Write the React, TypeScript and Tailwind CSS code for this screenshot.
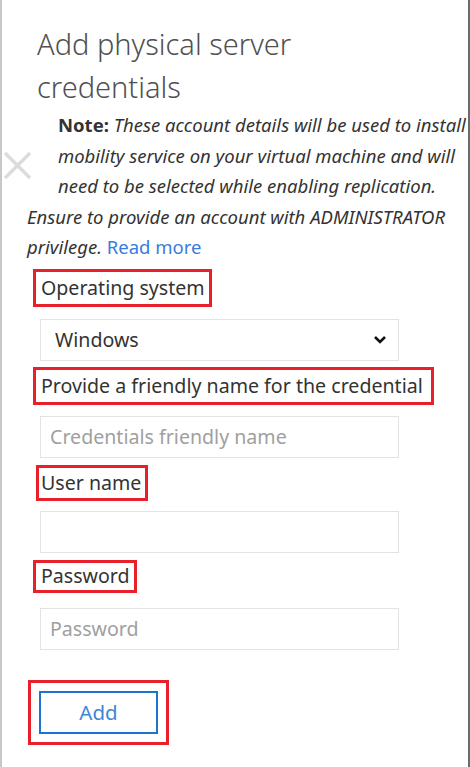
import React from "react";

function Field({ label, labelBox, children }: { label: string; labelBox: string; children: React.ReactNode }) {
  return (
    <div className="flex flex-col">
      <div className={`self-start border-[3px] border-[#e8202a] ${labelBox}`}>
        <span className="block text-[19.6px] leading-[24px] text-[#333]">{label}</span>
      </div>
      {children}
    </div>
  );
}

export default function App() {
  const inputCls =
    "w-[359px] h-[42px] ml-[7px] border border-[#e3e3e3] bg-white px-[9px] text-[19.6px] text-[#333] placeholder:text-[#a0a0a0] outline-none";

  return (
    <div
      className="relative w-[470px] h-[767px] overflow-hidden bg-white border-l-2 border-l-[#c8c8c8] border-r-2 border-r-[#6b6b6b]"
      style={{ fontFamily: '"Noto Sans", "Open Sans", sans-serif' }}
    >
      {/* close icon peeking in from the blade behind */}
      <svg className="absolute left-[1px] top-[151px]" width="30" height="29" viewBox="0 0 30 29">
        <path d="M2 2 L27 27 M27 2 L2 27" stroke="#dcdcdc" strokeWidth="3.5" />
      </svg>

      <h1 className="pl-[35px] pt-[22px] text-[29px] leading-[43px] font-light text-[#505050]">
        Add physical server
        <br />
        credentials
      </h1>

      <div className="mt-[2px] text-[18.5px] leading-[30.5px] italic text-[#333]">
        <p className="pl-[56px] whitespace-nowrap">
          <span className="not-italic font-bold">Note:</span> These account details will be used to install
          <br />
          mobility service on your virtual machine and will
          <br />
          need to be selected while enabling replication.
        </p>
        <p className="pl-[25px] whitespace-nowrap">
          Ensure to provide an account with ADMINISTRATOR
          <br />
          privilege. <span className="not-italic text-[#3a7be0]">Read more</span>
        </p>
      </div>

      <div className="pl-[31px] mt-[6px] flex flex-col">
        <Field label="Operating system" labelBox="pl-[5px] pr-[4px] py-[4px]">
          <div className={`${inputCls} mt-[12px] flex items-center justify-between pl-[14px]`}>
            <span>Windows</span>
            <svg width="14" height="10" viewBox="0 0 14 10" className="mr-[2px]">
              <path d="M2 2 L7 7 L12 2" stroke="#111" strokeWidth="2.6" fill="none" />
            </svg>
          </div>
        </Field>

        <div className="mt-[6px]">
          <Field label="Provide a friendly name for the credential" labelBox="pl-[5px] pr-[8px] py-[4px]">
            <input className={`${inputCls} mt-[11px]`} placeholder="Credentials friendly name" />
          </Field>
        </div>

        <div className="mt-[7px] ml-[3px]">
          <Field label="User name" labelBox="pl-[2px] pr-[4px] py-[3px]">
            <input className={`${inputCls} !ml-[4px] mt-[10px]`} />
          </Field>
        </div>

        <div className="mt-[7px]">
          <Field label="Password" labelBox="pl-[5px] pr-[4px] py-[1.5px]">
            <input className={`${inputCls} mt-[15px]`} placeholder="Password" />
          </Field>
        </div>

        <div className="mt-[30px] -ml-[5px] self-start border-[3px] border-[#e8202a] p-[8px]">
          <button className="w-[119px] h-[43px] border-2 border-[#1d74cf] text-[20.5px] text-[#3d86d8] bg-white">
            Add
          </button>
        </div>
      </div>
    </div>
  );
}
